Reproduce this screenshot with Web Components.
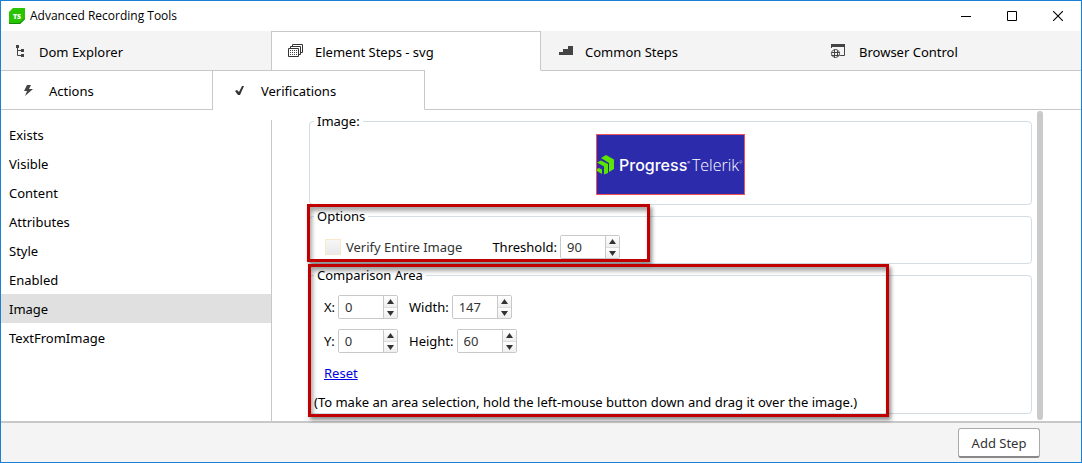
<!DOCTYPE html>
<html lang="en">
<head>
<meta charset="utf-8">
<title>Advanced Recording Tools</title>
<style>
  html, body { height: 100%; margin: 0; }
  body { font: 13px/20px "Noto Sans", "Open Sans", sans-serif; color: #000; background: #fff; }
</style>
</head>
<body>
<recording-window></recording-window>
<script>
const define = (name, html, setup) => {
  const template = document.createElement('template');
  template.innerHTML = html;
  customElements.define(name, class extends HTMLElement {
    constructor() {
      super();
      this.attachShadow({ mode: 'open' }).append(template.content.cloneNode(true));
    }
    connectedCallback() { if (setup) setup(this, this.shadowRoot); }
  });
};

define('title-bar', `
<style>
  :host { display: flex; align-items: center; height: 30px; padding-left: 8px; font: 12px/20px "Open Sans", sans-serif; }
  .logo { margin-right: 5px; }
  h1 { font: inherit; margin: 0; flex: 1; }
  button { border: 0; background: none; padding: 0; width: 46px; height: 30px; display: grid; place-items: center; }
</style>
<svg class="logo" width="16" height="16" viewBox="0 0 16 16" aria-hidden="true">
  <path d="M4 0H16V11L11 16H0V4Z" fill="#28c400"/>
  <path d="M0 14.500V16H11L16 11V10L10.500 15H1Z" fill="#168a08"/>
  <text x="8" y="11" text-anchor="middle" font-family="Open Sans" font-weight="800" font-size="7" fill="#fff">TS</text>
</svg>
<h1><slot></slot></h1>
<button aria-label="Minimize"><svg width="10" height="10"><path d="M0 5.5H10" stroke="#000"/></svg></button>
<button aria-label="Maximize"><svg width="10" height="10"><path d="M.5 .5H9.5V9.5H.5Z" stroke="#000" fill="none"/></svg></button>
<button aria-label="Close"><svg width="10" height="10"><path d="M0 0L10 10M10 0L0 10" stroke="#000" stroke-width="1.1"/></svg></button>
`);

define('tab-item', `
<style>
  :host { display: block; box-sizing: border-box; height: 40px; border-bottom: 1px solid #c8c8c8; }
  :host([level="main"]) { flex: 0 0 25%; background: #f4f4f4; }
  :host([level="main"][selected]) { background: #fff; border: 1px solid #c8c8c8; border-bottom-color: #fff; }
  :host([level="sub"]) { width: 212px; border-top: 1px solid #c8c8c8; border-right: 1px solid #c8c8c8; }
  :host([level="sub"][selected]) { background: #fff; border-bottom-color: #fff; }
  button { box-sizing: border-box; display: flex; align-items: center; width: 100%; height: 100%; border: 0; background: none; padding: 2px 0 0 14px; font: inherit; color: inherit; }
  :host([level="sub"]) button { padding-left: 22px; }
</style>
<button role="tab"><slot name="icon"></slot><slot></slot></button>
`, (host, root) => root.querySelector('button').setAttribute('aria-selected', host.hasAttribute('selected')));

define('tab-strip', `
<style>
  :host { display: flex; }
  :host([sub]) { position: relative; margin-top: -1px; }
  :host([sub])::after { content: ""; flex: 1; border-bottom: 1px solid #c8c8c8; }
</style>
<slot></slot>`);

define('side-list', `
<style>
  :host { display: block; box-sizing: border-box; border-right: 1px solid #c8c8c8; }
  ul { list-style: none; margin: 0; padding: 0; }
  button { display: block; width: 100%; height: 29px; padding: 0 8px; border: 0; background: none; font: inherit; text-align: left; }
  button[aria-current] { background: #e0e0e0; }
</style>
<ul></ul>`, (host, root) => {
  const list = root.querySelector('ul');
  for (const name of host.getAttribute('items').split(',')) {
    const button = document.createElement('button');
    button.textContent = name;
    if (name === host.getAttribute('current')) button.setAttribute('aria-current', 'true');
    const item = document.createElement('li');
    item.append(button);
    list.append(item);
  }
});

define('group-box', `
<style>
  :host { display: block; position: relative; }
  fieldset { margin: 0; min-width: 0; padding: 0 4px; border: 1px solid #d3dde6; border-radius: 4px; }
  legend { padding: 0 3px; height: 20px; }
  .mark { position: absolute; z-index: 1; pointer-events: none; border: 3px solid #c00000; box-sizing: border-box; display: none;
    box-shadow: 2px 3px 4px rgba(0,0,0,.45), inset 2px 4px 4px rgba(0,0,0,.35); }
  :host([marked="options"]) .mark { display: block; left: -2px; top: -2px; width: 343px; height: 58px; }
  :host([marked="area"]) .mark { display: block; left: -1px; top: -1px; width: 581px; height: 153px; }
</style>
<fieldset><legend></legend><slot></slot></fieldset>
<div class="mark"></div>`, (host, root) => root.querySelector('legend').textContent = host.getAttribute('label'));

define('number-field', `
<style>
  :host { display: flex; align-items: center; gap: 3px; }
  .box { display: grid; grid-template-columns: 44px 14px; box-sizing: border-box; height: 24px; border: 1px solid #c8c8c8; border-radius: 2px; overflow: hidden; }
  input { box-sizing: border-box; width: 44px; height: 22px; border: 0; padding: 0 6px; margin: 0; font: inherit; color: #333; appearance: textfield; outline: 0; }
  input::-webkit-inner-spin-button { appearance: none; margin: 0; }
  .steps { display: grid; grid-template-rows: 1fr 1fr; border-left: 1px solid #c8c8c8; }
  button { border: 0; padding: 0; display: grid; place-items: center; background: linear-gradient(#fff, #eee); }
  button + button { border-top: 1px solid #ddd; }
</style>
<label for="value"></label>
<div class="box"><input id="value" type="number">
  <div class="steps">
    <button aria-label="Increase"><svg width="7" height="5"><path d="M0 5L3.5 0L7 5Z" fill="#333"/></svg></button>
    <button aria-label="Decrease"><svg width="7" height="5"><path d="M0 0L3.5 5L7 0Z" fill="#333"/></svg></button>
  </div>
</div>`, (host, root) => {
  root.querySelector('label').textContent = host.getAttribute('label');
  const input = root.querySelector('input');
  input.value = host.getAttribute('value');
  const [up, down] = root.querySelectorAll('button');
  up.onclick = () => input.stepUp();
  down.onclick = () => input.stepDown();
});

define('check-field', `
<style>
  :host { display: block; }
  label { display: flex; align-items: center; gap: 5px; color: #333; }
  input { appearance: none; box-sizing: border-box; width: 16px; height: 16px; margin: 0; border: 1px solid #f8e8cc; background: linear-gradient(#f6f6f6, #eaeaea); }
  input:checked { background: #777; }
</style>
<label><input type="checkbox"><slot></slot></label>`);

define('captured-image', `
<style>
  :host { display: flex; align-items: center; box-sizing: border-box; width: 149px; height: 61px; border: 1px solid #f0525c; background: #2b2bab; color: #fff; white-space: nowrap; }
  svg { flex: none; margin-right: 4px; }
  b { font: 500 16px/20px Inter, sans-serif; }
  span { font: 300 16px/20px "Open Sans", sans-serif; margin-left: 2px; }
  small { font-size: 4px; vertical-align: 7px; line-height: 0; }
</style>
<svg width="18" height="20" viewBox="0 0 18 20" fill="#5ce500" aria-hidden="true">
  <path d="M4 3L9 0L17 4.500V14L12 17V8L4 3Z"/>
  <path d="M0 7.500L4 5.500L11 9V18L7 19.500V11.500L0 7.500Z"/>
  <path d="M0 14L2 13L5 14.500V19L0 16Z"/>
</svg>
<b>Progress<small>®</small></b><span>Telerik<small>®</small></span>`);

define('image-panel', `
<style>
  :host { display: flex; flex-direction: column; padding: 0 5px 0 37px; box-sizing: border-box; }
  .picture { display: flex; justify-content: center; padding: 3px 0 9px; }
  .options { display: flex; align-items: center; gap: 30px; padding: 9px 11px 4px; }
  group-box + group-box { margin-top: 1px; }
  .area { display: grid; grid-template-columns: 75px max-content; gap: 10px; padding: 10px 10px 0; }
  a { display: inline-block; margin: 10px 10px 0; color: #0000e0; }
  p { margin: 9px 0 1px; }
</style>
<group-box label="Image:"><div class="picture"><captured-image></captured-image></div></group-box>
<group-box label="Options" marked="options">
  <div class="options"><check-field>Verify Entire Image</check-field><number-field label="Threshold:" value="90"></number-field></div>
</group-box>
<group-box label="Comparison Area" marked="area">
  <div class="area">
    <number-field label="X:" value="0"></number-field><number-field label="Width:" value="147"></number-field>
    <number-field label="Y:" value="0"></number-field><number-field label="Height:" value="60"></number-field>
  </div>
  <a href="#reset">Reset</a>
  <p>(To make an area selection, hold the left-mouse button down and drag it over the image.)</p>
</group-box>`);

define('recording-window', `
<style>
  :host { display: flex; flex-direction: column; box-sizing: border-box; min-height: 100%; border: 1px solid #1a7fd6; background: #fff; }
  main { flex: 1; display: grid; grid-template-columns: 271px minmax(0, 1fr) 6px; padding-right: 38px; }
  side-list { margin-top: 10px; }
  .bar { background: #cacaca; border-radius: 3px; margin: 1px 0; }
  image-panel { margin-top: 1px; }
  footer { display: flex; justify-content: flex-end; box-sizing: border-box; height: 41px; padding: 5px 41px 0; background: #f4f4f4; border-top: 2px solid #c8c8c8; }
  footer button { box-sizing: border-box; width: 82px; height: 30px; border: 1px solid #aaa; border-bottom: 2px solid #888; border-radius: 3px; background: #fff; color: #333; padding: 0; font: inherit; }
</style>
<title-bar>Advanced Recording Tools</title-bar>
<tab-strip role="tablist">
  <tab-item level="main">
    <svg slot="icon" width="24" height="16" viewBox="0 0 24 16" aria-hidden="true"><path d="M2.500 2V11.500H7M2.500 6.500H7" stroke="#444" fill="none"/><path d="M1 1h3v3H1zM6 5h3v3H6zM6 10h3v3H6z" fill="#444"/></svg>Dom Explorer</tab-item>
  <tab-item level="main" selected>
    <svg slot="icon" width="29" height="16" viewBox="0 0 29 16" aria-hidden="true"><g stroke="#333" fill="#fff"><path d="M6.500 .5H16.500V8.500H6.500Z"/><path d="M4.500 2.500H14.500V10.500H4.500Z"/><path d="M2.500 4.500H12.500V12.500H2.500Z"/></g><path d="M4 6.500H12M4 8.500H12M4 10.500H12" stroke="#444" stroke-dasharray="1 1"/></svg>Element Steps - svg</tab-item>
  <tab-item level="main">
    <svg slot="icon" width="30" height="16" viewBox="0 0 30 16" aria-hidden="true"><path d="M4 8H8V5H13V2H18V11H4Z" fill="#444"/></svg>Common Steps</tab-item>
  <tab-item level="main">
    <svg slot="icon" width="34" height="16" viewBox="0 0 34 16" aria-hidden="true"><path d="M6.500 4V1.500H19.500V11.500H15" stroke="#444" fill="none"/><path d="M6 0H20V3H6Z" fill="#444"/><circle cx="10.500" cy="9.500" r="5" fill="#f4f4f4"/><path d="M10.500 5.500a4 4 0 1 0 .01 0ZM9.500 5.500V13.500M12.500 6.500V12.500M6.500 8.500H14.500M6.500 11.500H14.500" stroke="#444" fill="none"/></svg>Browser Control</tab-item>
</tab-strip>
<tab-strip role="tablist" sub>
  <tab-item level="sub">
    <svg slot="icon" width="26" height="12" viewBox="0 0 26 12" aria-hidden="true"><path d="M4 0H8L6 4H10L2 11L4 6H1Z" fill="#444"/></svg>Actions</tab-item>
  <tab-item level="sub" selected>
    <svg slot="icon" width="26" height="12" viewBox="0 0 26 12" aria-hidden="true"><path d="M0 6L2 5L4 7L7 1H9L5 10H3Z" fill="#333"/></svg>Verifications</tab-item>
</tab-strip>
<main>
  <side-list items="Exists,Visible,Content,Attributes,Style,Enabled,Image,TextFromImage" current="Image"></side-list>
  <image-panel></image-panel>
  <div class="bar"></div>
</main>
<footer><button>Add Step</button></footer>`);
</script>
</body>
</html>
